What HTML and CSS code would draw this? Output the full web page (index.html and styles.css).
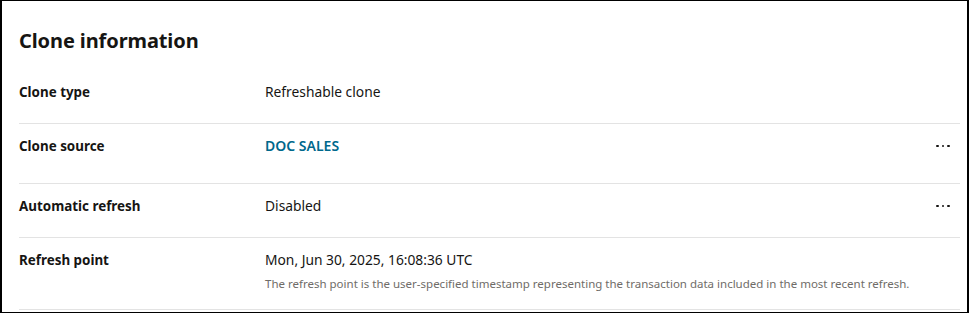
FILE: index.html
```html
<!DOCTYPE html>
<html lang="en">
<head>
<meta charset="utf-8">
<title>Clone information</title>
<link rel="stylesheet" href="styles.css">
</head>
<body>
<section class="panel">
  <h2 class="title">Clone information</h2>
  <dl class="list">
    <div class="row row-first">
      <dt class="label">Clone type</dt>
      <dd class="value"><span class="text">Refreshable clone</span></dd>
    </div>
    <div class="row row-tall">
      <dt class="label">Clone source</dt>
      <dd class="value"><a class="link" href="#">DOC SALES</a></dd>
      <button class="more" aria-label="More actions"><span class="dot"></span><span class="dot"></span><span class="dot"></span></button>
    </div>
    <div class="row">
      <dt class="label">Automatic refresh</dt>
      <dd class="value"><span class="text">Disabled</span></dd>
      <button class="more" aria-label="More actions"><span class="dot"></span><span class="dot"></span><span class="dot"></span></button>
    </div>
    <div class="row row-last">
      <dt class="label">Refresh point</dt>
      <dd class="value">
        <span class="text">Mon, Jun 30, 2025, 16:08:36 UTC</span>
        <span class="help">The refresh point is the user-specified timestamp representing the transaction data included in the most recent refresh.</span>
      </dd>
    </div>
  </dl>
</section>
</body>
</html>
```
FILE: styles.css
```css
html, body {
  margin: 0;
  padding: 0;
  background: #ffffff;
}
body {
  font-family: "Noto Sans", "Open Sans", sans-serif;
  color: #161513;
}
.panel {
  box-sizing: border-box;
  width: 969px;
  height: 313px;
  border: 1px solid #000;
  border-right-width: 2px;
  border-left-width: 2px;
  padding: 0 8px 0 17px;
  overflow: hidden;
}
.title {
  margin: 0;
  padding-top: 26px;
  font-size: 20px;
  line-height: 28px;
  font-weight: 700;
  letter-spacing: -0.1px;
}
.list {
  margin: 0;
  padding: 0;
  width: 941px;
}
.row {
  display: flex;
  align-items: flex-start;
  border-bottom: 1px solid #e3e3e3;
  padding: 12px 0 21px;
}
.row-first {
  padding-top: 27px;
}
.row-tall {
  padding-bottom: 27px;
}
.row-last {
  padding-bottom: 17px;
}
.label {
  width: 246px;
  margin: 0;
  font-size: 13.4px;
  line-height: 20px;
  font-weight: 700;
}
.value {
  flex: 1;
  margin: 0;
  display: flex;
  flex-direction: column;
}
.text {
  font-size: 13.8px;
  line-height: 20px;
}
.link {
  font-size: 14px;
  line-height: 20px;
  font-weight: 600;
  color: #00688c;
  text-decoration: none;
}
.help {
  margin-top: 6px;
  font-size: 11.5px;
  line-height: 16px;
  color: #6f6c68;
}
.more {
  display: flex;
  gap: 3px;
  align-items: center;
  justify-content: center;
  width: 24px;
  height: 20px;
  padding: 0;
  margin-right: 5px;
  border: 0;
  background: transparent;
}
.dot {
  width: 2.5px;
  height: 2.5px;
  border-radius: 50%;
  background: #161513;
}
```
